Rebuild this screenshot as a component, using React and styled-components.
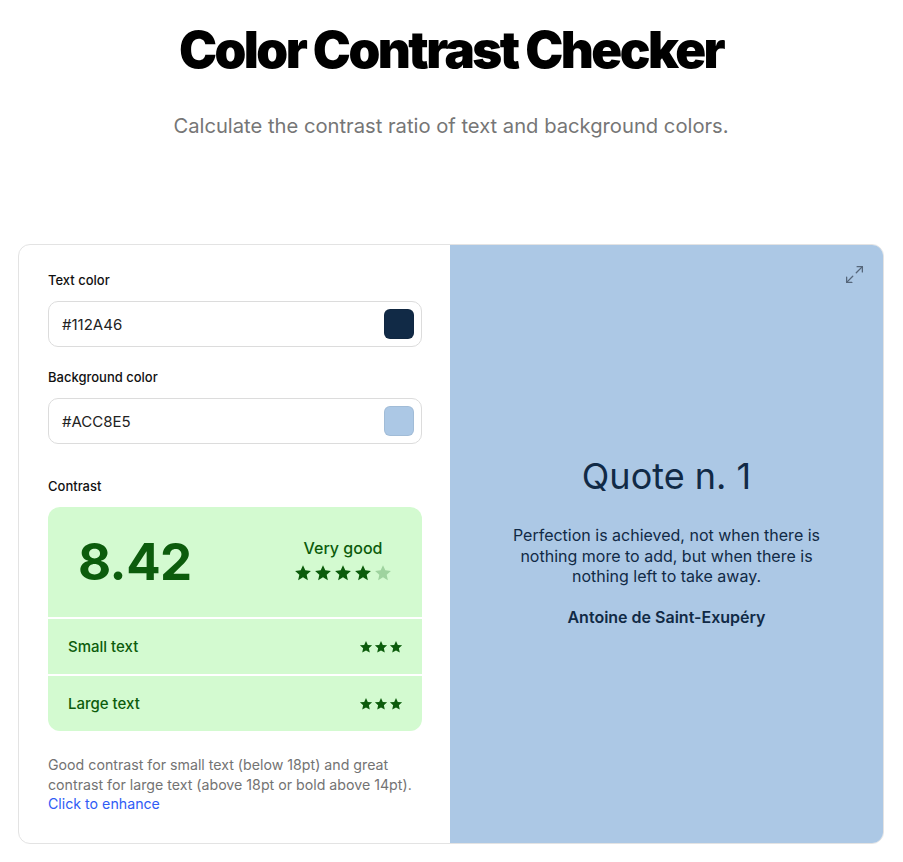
import React from 'react';
import styled, { createGlobalStyle } from 'styled-components';
import { Maximize2 } from 'lucide-react';

const GlobalStyle = createGlobalStyle`
  body {
    margin: 0;
    background: #fff;
    font-family: Inter, 'Noto Sans', sans-serif;
  }
`;

const Page = styled.div`
  padding: 19px 19px 18px 18px;
  display: flex;
  flex-direction: column;
  align-items: center;
`;

const Title = styled.h1`
  margin: 0;
  font-size: 51px;
  font-weight: 900;
  letter-spacing: -0.05em;
  line-height: 62px;
  color: #000;
`;

const Subtitle = styled.p`
  margin: 32px 0 0;
  font-size: 20.2px;
  line-height: 26px;
  color: #767676;
`;

const Card = styled.div`
  margin-top: 105px;
  width: 100%;
  display: grid;
  grid-template-columns: 431px 1fr;
  border: 1px solid #e3e3e3;
  border-radius: 12px;
  overflow: hidden;
  box-sizing: border-box;
  height: 600px;
`;

const Controls = styled.div`
  padding: 27px 28px 30px 29px;
  display: flex;
  flex-direction: column;
`;

const Label = styled.div`
  font-size: 13px;
  font-weight: 500;
  color: #111;
  line-height: 16px;
  margin-bottom: 13px;
`;

const Field = styled.div`
  display: flex;
  align-items: center;
  justify-content: space-between;
  height: 46px;
  box-sizing: border-box;
  border: 1px solid #dcdcdc;
  border-radius: 10px;
  padding: 0 7px 0 13px;
  margin-bottom: ${(p) => p.$mb || 0}px;
  font-size: 15px;
  color: #222;
`;

const Swatch = styled.div`
  width: 30px;
  height: 30px;
  border-radius: 6px;
  background: ${(p) => p.$color};
  border: 1px solid rgba(0, 0, 0, 0.06);
  box-sizing: border-box;
`;

const ScoreBox = styled.div`
  border-radius: 12px;
  overflow: hidden;
  display: flex;
  flex-direction: column;
  gap: 2px;
  background: #fff;
  color: #0c5c0c;
`;

const ScoreTop = styled.div`
  height: 110px;
  background: #d3fad0;
  display: flex;
  align-items: flex-start;
  justify-content: space-between;
  padding: 26px 30px 0 30px;
  box-sizing: border-box;
`;

const Ratio = styled.div`
  font-size: 51px;
  font-weight: 700;
  line-height: 58px;
  letter-spacing: -0.01em;
`;

const Verdict = styled.div`
  display: flex;
  flex-direction: column;
  align-items: center;
  padding-top: 6px;
  font-size: 16px;
  font-weight: 500;
  line-height: 18px;
  gap: 7px;
`;

const Stars = styled.div`
  display: flex;
  gap: ${(p) => p.$gap}px;
`;

const Row = styled.div`
  height: 55px;
  background: #d3fad0;
  display: flex;
  align-items: center;
  justify-content: space-between;
  padding: 0 19px 0 20px;
  font-size: 15px;
  font-weight: 500;
`;

const Note = styled.p`
  margin: 24px 0 0;
  font-size: 14.2px;
  line-height: 19.5px;
  color: #737373;
`;

const Link = styled.a`
  color: #2f5cf5;
  text-decoration: none;
`;

const Preview = styled.div`
  background: #acc8e5;
  position: relative;
  display: flex;
  flex-direction: column;
  align-items: center;
  justify-content: center;
  text-align: center;
  color: #112a46;
  padding: 0 56px 8px;
`;

const ExpandButton = styled.div`
  position: absolute;
  top: 19px;
  right: 18px;
  color: #55667a;
  display: flex;
`;

const QuoteTitle = styled.h2`
  margin: 0;
  font-size: 36px;
  font-weight: 400;
  line-height: 44px;
`;

const QuoteText = styled.p`
  margin: 27px 0 0;
  font-size: 16px;
  line-height: 20.5px;
`;

const Author = styled.div`
  margin-top: 20px;
  font-size: 16px;
  font-weight: 600;
`;

const Star = ({ size, color }) => (
  <svg width={size} height={size} viewBox="0 0 24 24">
    <path
      fill={color}
      d="M12 1.5l3.1 6.9 7.4.8-5.6 5 1.6 7.4L12 17.8l-6.5 3.8 1.6-7.4-5.6-5 7.4-.8z"
    />
  </svg>
);

export default function App() {
  return (
    <>
      <GlobalStyle />
      <Page>
        <Title>Color Contrast Checker</Title>
        <Subtitle>Calculate the contrast ratio of text and background colors.</Subtitle>
        <Card>
          <Controls>
            <Label>Text color</Label>
            <Field $mb={22}>
              #112A46
              <Swatch $color="#112a46" />
            </Field>
            <Label>Background color</Label>
            <Field $mb={34}>
              #ACC8E5
              <Swatch $color="#acc8e5" />
            </Field>
            <Label>Contrast</Label>
            <ScoreBox>
              <ScoreTop>
                <Ratio>8.42</Ratio>
                <Verdict>
                  Very good
                  <Stars $gap={2}>
                    {[0, 1, 2, 3, 4].map((i) => (
                      <Star key={i} size={18} color={i < 4 ? '#0c5c0c' : '#9fd39f'} />
                    ))}
                  </Stars>
                </Verdict>
              </ScoreTop>
              <Row>
                Small text
                <Stars $gap={1}>
                  {[0, 1, 2].map((i) => (
                    <Star key={i} size={14} color="#0c5c0c" />
                  ))}
                </Stars>
              </Row>
              <Row>
                Large text
                <Stars $gap={1}>
                  {[0, 1, 2].map((i) => (
                    <Star key={i} size={14} color="#0c5c0c" />
                  ))}
                </Stars>
              </Row>
            </ScoreBox>
            <Note>
              Good contrast for small text (below 18pt) and great contrast for large text
              (above 18pt or bold above 14pt).
              <br />
              <Link href="#">Click to enhance</Link>
            </Note>
          </Controls>
          <Preview>
            <ExpandButton>
              <Maximize2 size={21} strokeWidth={1.5} />
            </ExpandButton>
            <QuoteTitle>Quote n. 1</QuoteTitle>
            <QuoteText>
              Perfection is achieved, not when there is nothing more to add, but when there is
              nothing left to take away.
            </QuoteText>
            <Author>Antoine de Saint-Exupéry</Author>
          </Preview>
        </Card>
      </Page>
    </>
  );
}
